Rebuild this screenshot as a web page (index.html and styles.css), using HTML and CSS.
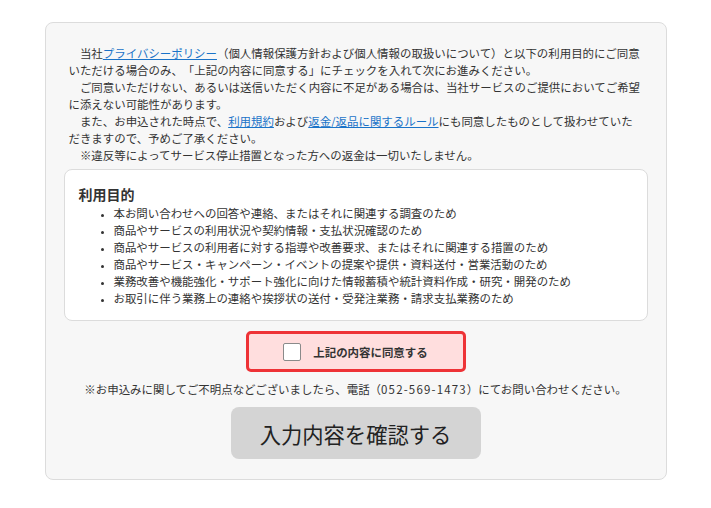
FILE: index.html
```html
<!DOCTYPE html>
<html lang="ja">
<head>
<meta charset="utf-8">
<title>同意フォーム</title>
<link rel="stylesheet" href="styles.css">
</head>
<body>
<div class="panel">
  <div class="intro">
    <p class="para">　当社<a href="#" class="link">プライバシーポリシー</a>（個人情報保護方針および個人情報の取扱いについて）と以下の利用目的にご同意いただける場合のみ、「上記の内容に同意する」にチェックを入れて次にお進みください。</p>
    <p class="para">　ご同意いただけない、あるいは送信いただく内容に不足がある場合は、当社サービスのご提供においてご希望に添えない可能性があります。</p>
    <p class="para">　また、お申込された時点で、<a href="#" class="link">利用規約</a>および<a href="#" class="link">返金/返品に関するルール</a>にも同意したものとして扱わせていただきますので、予めご了承ください。</p>
    <p class="para">　※違反等によってサービス停止措置となった方への返金は一切いたしません。</p>
  </div>
  <div class="purpose">
    <h2 class="purpose-title">利用目的</h2>
    <ul class="purpose-list">
      <li>本お問い合わせへの回答や連絡、またはそれに関連する調査のため</li>
      <li>商品やサービスの利用状況や契約情報・支払状況確認のため</li>
      <li>商品やサービスの利用者に対する指導や改善要求、またはそれに関連する措置のため</li>
      <li>商品やサービス・キャンペーン・イベントの提案や提供・資料送付・営業活動のため</li>
      <li>業務改善や機能強化・サポート強化に向けた情報蓄積や統計資料作成・研究・開発のため</li>
      <li>お取引に伴う業務上の連絡や挨拶状の送付・受発注業務・請求支払業務のため</li>
    </ul>
  </div>
  <div class="agree-row">
    <label class="agree">
      <span class="checkbox"></span>
      <span class="agree-text">上記の内容に同意する</span>
    </label>
  </div>
  <p class="note">※お申込みに関してご不明点などございましたら、電話（<span class="tel">052-569-1473</span>）にてお問い合わせください。</p>
  <div class="btn-row">
    <button class="confirm" type="button">入力内容を確認する</button>
  </div>
</div>
</body>
</html>
```
FILE: styles.css
```css
html, body {
  margin: 0;
  padding: 0;
  background: #ffffff;
}
body {
  font-family: "Noto Sans CJK JP", "Noto Sans", sans-serif;
  color: #333333;
  padding-top: 22px;
  text-spacing-trim: space-all;
}
.panel {
  width: 584px;
  margin: 0 auto;
  box-sizing: content-box;
  border: 1px solid #dcdcdc;
  border-radius: 8px;
  background: #f7f7f7;
  padding: 22px 18px 20px 18px;
}
.intro {
  padding: 0 5px;
}
.para {
  margin: 0;
  font-size: 11.45px;
  line-height: 17px;
}
.link {
  color: #1a73c8;
  text-decoration: underline;
}
.purpose {
  margin-top: 5px;
  background: #ffffff;
  border: 1px solid #dcdcdc;
  border-radius: 8px;
  padding: 14px 14px 13px 14px;
}
.purpose-title {
  margin: 0;
  font-size: 14px;
  font-weight: bold;
  line-height: 21px;
  color: #333333;
}
.purpose-list {
  margin: 0;
  padding-left: 35px;
  font-size: 11.45px;
  line-height: 17px;
}
.purpose-list li::marker {
  font-size: 9px;
}
.agree-row {
  display: flex;
  justify-content: center;
  margin-top: 10px;
}
.agree {
  width: 214px;
  height: 35px;
  border: 3px solid #ee3236;
  border-radius: 5px;
  background: #ffdede;
  display: flex;
  align-items: center;
  justify-content: center;
  gap: 12px;
}
.checkbox {
  width: 16px;
  height: 16px;
  border: 1px solid #8a8a8a;
  border-radius: 2px;
  background: #ffffff;
}
.agree-text {
  font-size: 11.45px;
  font-weight: bold;
  color: #333333;
}
.note {
  margin: 9px 0 0 0;
  text-align: center;
  font-size: 11.45px;
  line-height: 17px;
}
.tel {
  letter-spacing: 1.2px;
}
.btn-row {
  display: flex;
  justify-content: center;
  margin-top: 9px;
}
.confirm {
  width: 250px;
  height: 52px;
  border: none;
  border-radius: 8px;
  background: #d4d4d4;
  color: #222222;
  font-family: "Noto Sans CJK JP", "Noto Sans", sans-serif;
  font-size: 21.3px;
}
```
